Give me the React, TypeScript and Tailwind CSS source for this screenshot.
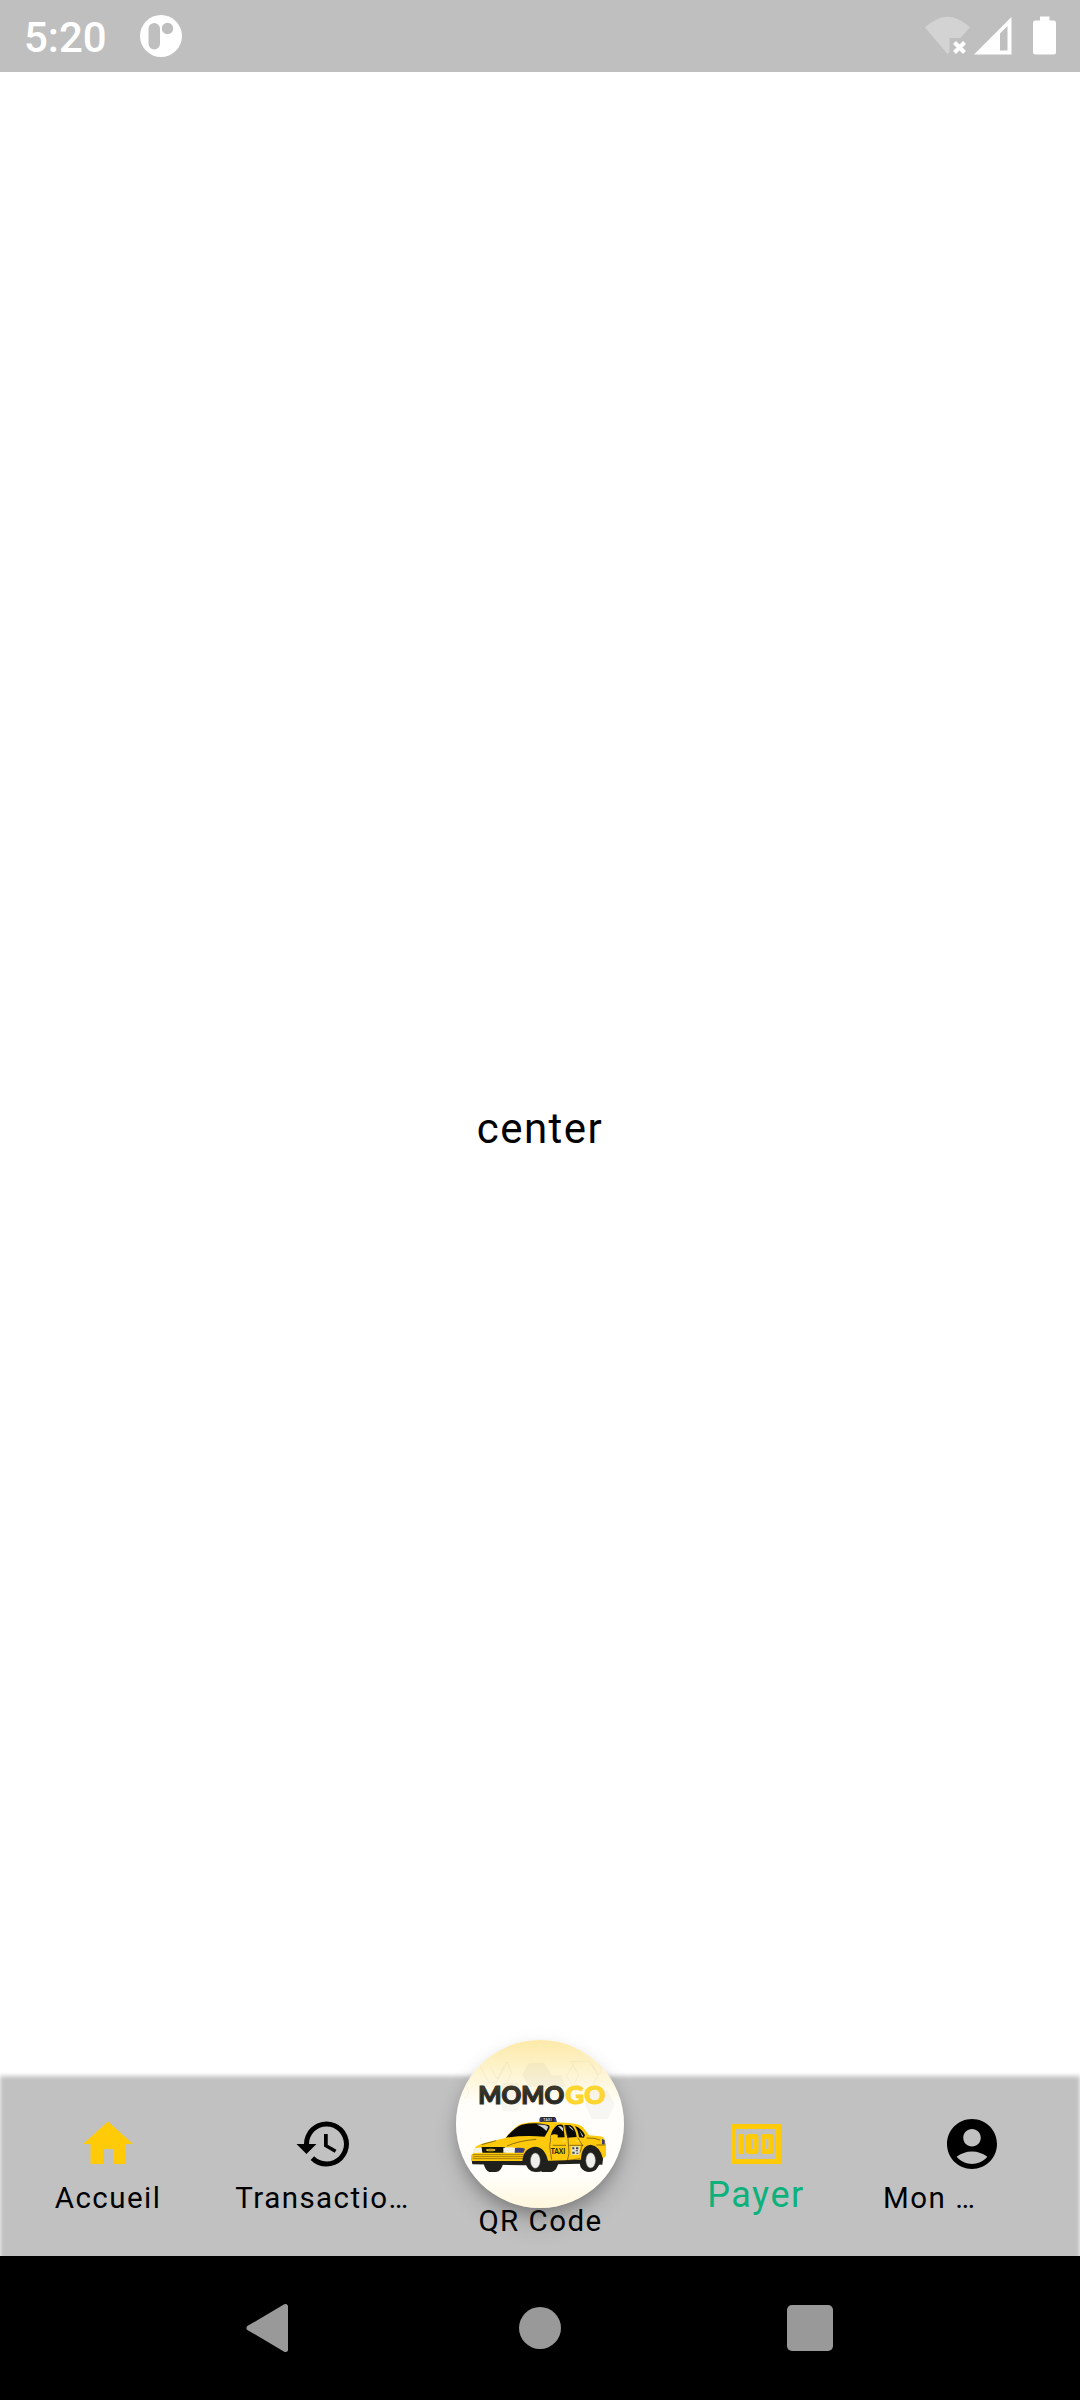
import React from "react";

function StatusBar() {
  return (
    <header className="flex h-[72px] w-full items-start justify-between bg-[#bfbfbf] text-white">
      <div className="flex items-start">
        <span className="ml-[24px] mt-[13px] w-[98px] text-[42px] font-medium leading-[50px]">5:20</span>
        <svg className="ml-[18px] mt-[15px]" width="42" height="42" viewBox="0 0 42 42">
          <circle cx="21" cy="21" r="21" fill="#fff" />
          <rect x="8.5" y="8" width="11.5" height="26.5" rx="5.75" fill="#bfbfbf" />
          <circle cx="27.5" cy="13.5" r="5.7" fill="#bfbfbf" />
        </svg>
      </div>
      <svg width="155" height="72" viewBox="925 0 155 72" fill="#fff">
        <path d="M925 27.500Q947.500 6 970 27.500L960.500 38H949.500V52L947.500 54Z" fill="#d3d3d3" />
        <path d="M954.500 42.500L964.500 52.500M964.500 42.500L954.500 52.500" stroke="#fff" strokeWidth="4.200" />
        <path fillRule="evenodd" d="M1011.500 17V54.500H974ZM1007.500 26L1000 33.500V50.500H1007.500Z" />
        <path d="M1040 16.500H1049.500V20.500H1053.500Q1056 20.500 1056 23V52Q1056 54.500 1053.500 54.500H1035.500Q1033 54.500 1033 52V23Q1033 20.500 1035.500 20.500H1040Z" />
      </svg>
    </header>
  );
}

function Hexagons() {
  return (
    <g>
      <g fill="#7d7d60" opacity=".06">
        <path d="M268 129H313L335 164L313 200H268L246 164Z" />
        <path d="M190 188H232L248 230L232 274H190L172 232Z" />
        <path d="M456 212H503L524 253L503 297H456L434 253Z" fill="#777" />
        <path d="M325 165H362L378 200H310Z" />
      </g>
      <g fill="none" stroke="#777" strokeWidth="1.500" opacity=".13">
        <path d="M120 138L146 187L170 188L201 126L215 158L201 190" />
        <path d="M152 142L172 177L190 140" />
        <path d="M388 124H449L474 167L449 210H405L380 167L405 124" />
        <path d="M395 130L416 165L398 200M455 130L475 165L485 150L475 124" />
        <path d="M72 235Q86 230 86 212L78 200" />
      </g>
    </g>
  );
}

function Taxi() {
  return (
    <g>
      <path d="M130 425H190Q186 455 168 456H148Q134 450 130 425ZM300 420H357Q352 453 334 456H305Z" fill="#20201d" />
      <path d="M94 415L97 433L253 436L350 433L420 431L487 434L490 408Z" fill="#20201d" />
      <path d="M94 423L93 406L100 400L106 382Q118 371 145 366L196 354Q222 321 243 312Q275 304 335 306L389 309Q418 312 429 322L447 346L480 349Q493 351 494 361L498 373V407L489 416L425 419L330 422L275 423Z" fill="#ffc90c" />
      <path d="M198 353Q224 321 245 314Q288 305 325 315Q332 319 326 329L314 350Q250 345 198 353Z" fill="#080908" />
      <path d="M290 314Q315 312 325 320L319 333Q307 319 290 314Z" fill="#cfd2ce" />
      <path d="M330 353Q337 324 352 315Q366 311 370 318L374 352Z" fill="#080908" />
      <path d="M375 315L392 316Q406 322 410 351L382 353Z" fill="#080908" />
      <path d="M404 318Q424 323 435 346L431 353L417 352Q414 329 404 318Z" fill="#080908" />
      <path d="M354 318Q366 317 369 325L370 335ZM385 319Q397 321 401 333ZM418 330L430 348L427 350Z" fill="#d9dbd5" />
      <path d="M333 346Q340 341 353 344V354Q338 359 331 354Z" fill="#ffc90c" />
      <path d="M299 305V294Q301 291 307 291H344Q349 292 349 306Z" fill="#252426" />
      <path d="M299 305V297L307 294V305ZM341 293L347 294L350 306H341Z" fill="#3a3979" />
      <text x="310" y="302" fontSize="10" fontWeight="700" fill="#eee" textLength="25">TAXI</text>
      <path d="M124 381H195L197 398H127Z" fill="#15150e" />
      <ellipse cx="152" cy="390" rx="14" ry="4" fill="#ffd21a" />
      <path d="M143 390H161" stroke="#333" strokeWidth="2" />
      <path d="M105 385L124 382L127 398L101 399ZM190 383Q215 380 228 384L225 398H190Z" fill="#f3f2e9" />
      <path d="M225 384Q246 381 255 386L250 398H224Z" fill="#3b3c7c" />
      <path d="M486 357L494 360V373H486Z" fill="#3b3c7c" />
      <path d="M98 404H253M98 410H251M98 416H250" stroke="#69500a" strokeWidth="1.800" />
      <g fill="none" stroke="#292411" strokeWidth="1.600">
        <path d="M125 374L168 362M201 378Q236 362 289 358M332 354L329 380L335 419M373 315L384 354L387 400L382 422M413 353L427 375L420 398M338 376H378M388 376H430M440 354Q464 353 480 360M469 375H496M378 422L421 416" />
        <path d="M367 363H378M406 363H419" stroke="#fff0a0" />
      </g>
      <path d="M247 424Q250 384 285 380Q314 380 324 422L318 444Q309 457 286 456Q260 453 257 428ZM423 418Q424 377 452 374Q479 377 489 416L472 443Q465 456 444 456Q421 452 419 430Z" fill="#20201d" />
      <ellipse cx="286" cy="422" rx="14.500" ry="23" fill="#efefed" stroke="#77776f" strokeWidth="1.500" />
      <ellipse cx="452" cy="421" rx="14.500" ry="23" fill="#efefed" stroke="#77776f" strokeWidth="1.500" />
      <text x="332" y="402" fontSize="20" fontWeight="900" fill="#292718" textLength="44" lengthAdjust="spacingAndGlyphs">TAXI</text>
      <path d="M394 379H420L417 404H394Z" fill="#e5e4d6" />
      <path d="M397 382H403V388H397ZM408 382H415V388H408ZM397 395H404V401H397ZM407 391H414V394H407ZM409 398H415V401H409Z" fill="#414244" />
    </g>
  );
}

function Logo() {
  return (
    <svg className="block size-[168px]" viewBox="48 60 504 504" fontFamily="Lato, sans-serif">
      <defs>
        <linearGradient id="disc" x1="0" y1="0" x2="0" y2="1">
          <stop offset="0" stopColor="#fdeaa9" />
          <stop offset=".14" stopColor="#fdf1c5" />
          <stop offset=".38" stopColor="#fffefa" />
          <stop offset=".8" stopColor="#fffefb" />
          <stop offset="1" stopColor="#fff7dc" />
        </linearGradient>
        <linearGradient id="dark" x1="0" y1="0" x2="0" y2="1">
          <stop offset="0" stopColor="#51492f" />
          <stop offset=".6" stopColor="#292923" />
        </linearGradient>
        <clipPath id="round"><circle cx="300" cy="312" r="252" /></clipPath>
      </defs>
      <circle cx="300" cy="312" r="252" fill="url(#disc)" />
      <g clipPath="url(#round)"><Hexagons /></g>
      <g fontSize="76" fontWeight="900" strokeWidth="3.5">
        <text x="115" y="253" textLength="258" lengthAdjust="spacingAndGlyphs" fill="url(#dark)" stroke="#33312a">MOMO</text>
        <text x="376" y="253" textLength="120" lengthAdjust="spacingAndGlyphs" fill="#ffd52f" stroke="#ffd52f">GO</text>
      </g>
      <Taxi />
    </svg>
  );
}

type ItemProps = { label: string; color: string; labelClass: string; children: React.ReactNode };

function NavItem({ label, color, labelClass, children }: ItemProps) {
  return (
    <div className="flex w-[216px] flex-col items-center pt-[38px]">
      <svg className="block size-[60px]" viewBox="0 0 24 24" fill={color}>{children}</svg>
      <span className={labelClass}>{label}</span>
    </div>
  );
}

const labelBase = "mt-[7px] whitespace-nowrap text-[29.5px] leading-[34px] tracking-[1.45px] text-black";

function BottomNav() {
  return (
    <nav className="relative flex h-[180px] w-full">
      <div className="absolute inset-x-0 top-0 -bottom-3 bg-[#c1c1c1] blur-[2px]" />
      <div className="relative flex w-full">
        <NavItem label="Accueil" color="#ffcb08" labelClass={labelBase}>
          <path d="M10 20v-6h4v6h5v-8h3L12 3 2 12h3v8z" />
        </NavItem>
        <NavItem label="Transactio…" color="#000" labelClass={"pr-[3px] " + labelBase}>
          <path d="M13 3a9 9 0 0 0-9 9H1l3.890 3.890.070.140L9 12H6c0-3.870 3.130-7 7-7s7 3.130 7 7-3.130 7-7 7c-1.930 0-3.680-.790-4.940-2.060l-1.420 1.420A8.954 8.954 0 0 0 13 21a9 9 0 0 0 0-18zm-1 5v5l4.280 2.540.720-1.210-3.500-2.080V8H12z" />
        </NavItem>
        <div className="-mt-[36px] flex w-[216px] flex-col items-center">
          <div className="rounded-full shadow-[0_8px_13px_-3px_rgba(0,0,0,0.2),0_16px_24px_rgba(0,0,0,0.14),0_3px_20px_rgba(0,0,0,0.06)]">
            <Logo />
          </div>
          <span className="-mt-[4px] whitespace-nowrap pl-[1px] text-[29.5px] leading-[34px] tracking-[1.45px] text-black">QR Code</span>
        </div>
        <NavItem label="Payer" color="#ffcb08" labelClass="whitespace-nowrap text-[36px] leading-[42px] tracking-[1.5px] text-[#0cb17b]">
          <path d="M5 8h2v8H5zm7 0H9c-.55 0-1 .45-1 1v6c0 .55.45 1 1 1h3c.55 0 1-.45 1-1V9c0-.55-.45-1-1-1zm-1 6h-1v-4h1v4zm7-6h-3c-.55 0-1 .45-1 1v6c0 .55.45 1 1 1h3c.55 0 1-.45 1-1V9c0-.55-.45-1-1-1zm-1 6h-1v-4h1v4z" />
          <path d="M2 4v16h20V4H2zm2 14V6h16v12H4z" />
        </NavItem>
        <NavItem label="Mon …" color="#000" labelClass="mt-[7px] self-start whitespace-nowrap pl-[19px] text-[29.5px] leading-[34px] tracking-[1.5px] text-black">
          <path d="M12 2C6.480 2 2 6.480 2 12s4.480 10 10 10 10-4.480 10-10S17.520 2 12 2zm0 4c1.930 0 3.500 1.570 3.500 3.500S13.930 13 12 13s-3.500-1.570-3.500-3.500S10.070 6 12 6zm0 14c-2.030 0-4.430-.820-6.140-2.880C7.550 15.800 9.680 15 12 15s4.450.800 6.140 2.120C16.430 19.180 14.030 20 12 20z" />
        </NavItem>
      </div>
    </nav>
  );
}

function SystemNav() {
  return (
    <footer className="relative flex h-[144px] w-full items-center bg-black pl-[246px]">
      <svg width="43" height="50" viewBox="0 0 43 50">
        <path d="M3 25L39.500 3.500V46.500Z" fill="#999" stroke="#999" strokeWidth="5" strokeLinejoin="round" />
      </svg>
      <div className="ml-[230px] size-[42px] rounded-full bg-[#999]" />
      <div className="ml-[226px] size-[46px] rounded-[5px] bg-[#999]" />
    </footer>
  );
}

export default function App() {
  return (
    <div className="flex h-[2400px] w-[1080px] flex-col overflow-hidden bg-white font-[Roboto,sans-serif]">
      <StatusBar />
      <main className="flex h-[2004px] justify-center pt-[1032px]">
        <p className="text-[42px] leading-[50px] tracking-[1.5px] text-black">center</p>
      </main>
      <BottomNav />
      <SystemNav />
    </div>
  );
}
